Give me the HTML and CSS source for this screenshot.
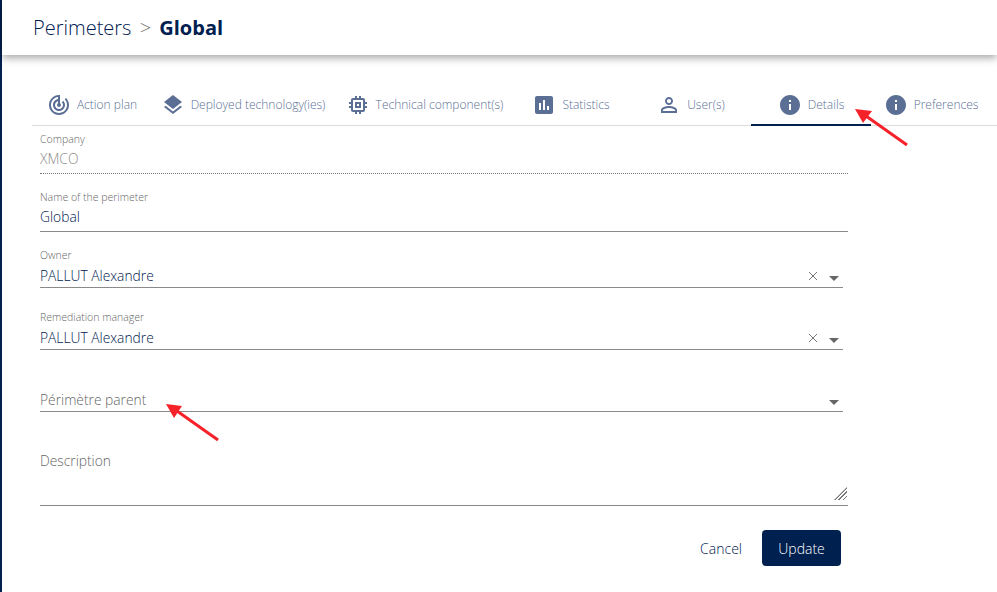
FILE: index.html
```html
<!DOCTYPE html>
<html lang="en">
<head>
    <meta charset="UTF-8">
    <title>Perimeters - Global</title>
    <link rel="stylesheet" href="styles.css">
</head>
<body>
    <div class="page">
        <header class="topbar">
            <h1 class="crumbs">Perimeters <span class="crumb-sep">&gt;</span> <strong>Global</strong></h1>
        </header>

        <nav class="tabs">
            <a class="tab">
                <svg class="tab-icon" viewBox="0 0 24 24"><path d="M19.07 4.93l-1.41 1.41C19.1 7.79 20 9.79 20 12c0 4.42-3.58 8-8 8s-8-3.58-8-8c0-4.08 3.05-7.44 7-7.93v2.02C8.16 6.57 6 9.03 6 12c0 3.31 2.69 6 6 6s6-2.69 6-6c0-1.66-.67-3.16-1.76-4.24l-1.41 1.41C15.55 9.9 16 10.9 16 12c0 2.21-1.79 4-4 4s-4-1.79-4-4c0-1.86 1.28-3.41 3-3.86v2.14c-.6.35-1 .98-1 1.72 0 1.1.9 2 2 2s2-.9 2-2c0-.74-.4-1.38-1-1.72V2h-1C6.48 2 2 6.48 2 12s4.48 10 10 10 10-4.48 10-10c0-2.76-1.12-5.26-2.93-7.07z"/></svg>
                Action plan
            </a>
            <a class="tab tab-deployed">
                <svg class="tab-icon" viewBox="0 0 24 24"><path d="M11.99 18.54l-7.37-5.73L3 14.07l9 7 9-7-1.63-1.27-7.38 5.74zM12 16l7.36-5.73L21 9l-9-7-9 7 1.63 1.27L12 16z"/></svg>
                Deployed technology(ies)
            </a>
            <a class="tab tab-technical">
                <svg class="tab-icon" viewBox="0 0 24 24"><path d="M15 9H9v6h6V9zm-2 4h-2v-2h2v2zm8-2V9h-2V7c0-1.1-.9-2-2-2h-2V3h-2v2h-2V3H9v2H7c-1.1 0-2 .9-2 2v2H3v2h2v2H3v2h2v2c0 1.1.9 2 2 2h2v2h2v-2h2v2h2v-2h2c1.1 0 2-.9 2-2v-2h2v-2h-2v-2h2zm-4 6H7V7h10v10z"/></svg>
                Technical component(s)
            </a>
            <a class="tab">
                <svg class="tab-icon" viewBox="0 0 24 24"><path d="M19 3H5c-1.1 0-2 .9-2 2v14c0 1.1.9 2 2 2h14c1.1 0 2-.9 2-2V5c0-1.1-.9-2-2-2zM9 17H7v-7h2v7zm4 0h-2V7h2v10zm4 0h-2v-4h2v4z"/></svg>
                Statistics
            </a>
            <a class="tab">
                <svg class="tab-icon" viewBox="0 0 24 24"><path d="M12 5.9c1.16 0 2.1.94 2.1 2.1s-.94 2.1-2.1 2.1S9.9 9.16 9.9 8s.94-2.1 2.1-2.1m0 9c2.97 0 6.1 1.46 6.1 2.1v1.1H5.9V17c0-.64 3.13-2.1 6.1-2.1M12 4C9.79 4 8 5.79 8 8s1.79 4 4 4 4-1.79 4-4-1.79-4-4-4zm0 9c-2.67 0-8 1.34-8 4v3h16v-3c0-2.66-5.33-4-8-4z"/></svg>
                User(s)
            </a>
            <a class="tab active">
                <svg class="tab-icon" viewBox="0 0 24 24"><path d="M12 2C6.48 2 2 6.48 2 12s4.48 10 10 10 10-4.48 10-10S17.52 2 12 2zm1 15h-2v-6h2v6zm0-8h-2V7h2v2z"/></svg>
                Details
            </a>
            <a class="tab">
                <svg class="tab-icon" viewBox="0 0 24 24"><path d="M12 2C6.48 2 2 6.48 2 12s4.48 10 10 10 10-4.48 10-10S17.52 2 12 2zm1 15h-2v-6h2v6zm0-8h-2V7h2v2z"/></svg>
                Preferences
            </a>
        </nav>

        <form class="details-form">
            <div class="field field-disabled">
                <label for="company">Company</label>
                <input type="text" id="company" value="XMCO" disabled>
            </div>

            <div class="field">
                <label for="perimeterName">Name of the perimeter</label>
                <input type="text" id="perimeterName" value="Global">
            </div>

            <div class="field field-select">
                <label>Owner</label>
                <div class="select-row">
                    <span class="select-value">PALLUT Alexandre</span>
                    <svg class="select-clear" viewBox="0 0 10 10"><path d="M1 1l8 8M9 1l-8 8"/></svg>
                    <span class="select-caret"></span>
                </div>
            </div>

            <div class="field field-select field-spaced">
                <label>Remediation manager</label>
                <div class="select-row">
                    <span class="select-value">PALLUT Alexandre</span>
                    <svg class="select-clear" viewBox="0 0 10 10"><path d="M1 1l8 8M9 1l-8 8"/></svg>
                    <span class="select-caret"></span>
                </div>
            </div>

            <div class="field field-select field-parent">
                <div class="select-row">
                    <span class="select-placeholder">Périmètre parent</span>
                    <span class="select-caret"></span>
                </div>
            </div>

            <div class="field field-description">
                <textarea id="description" placeholder="Description"></textarea>
            </div>

            <div class="form-actions">
                <button type="button" class="btn-cancel">Cancel</button>
                <button type="submit" class="btn-update">Update</button>
            </div>
        </form>

        <!-- red annotations drawn on top of the screenshot -->
        <svg class="annotations" viewBox="0 0 997 592">
            <line x1="907" y1="145" x2="866" y2="116"/>
            <polygon points="855,109 872,111 863,123"/>
            <line x1="218" y1="440" x2="177" y2="411"/>
            <polygon points="166,404 182,406 174,418"/>
        </svg>
    </div>
</body>
</html>
```

FILE: styles.css
```css
* {
    box-sizing: border-box;
}

html, body {
    margin: 0;
    height: 100%;
}

body {
    font-family: "Open Sans", "Liberation Sans", sans-serif;
    font-weight: 300;
    background-color: #fff;
    color: #00204f;
    overflow: hidden;
}

.page {
    position: relative;
    height: 592px;
    border-left: 2px solid #00204f;
}

.topbar {
    height: 55px;
    padding-left: 31px;
    display: flex;
    align-items: center;
    background-color: #fff;
    box-shadow: 0 3px 8px rgba(0, 0, 0, 0.35);
}

.crumbs {
    margin: 0 0 1px;
    font-size: 20px;
    font-weight: 300;
    line-height: 27px;
}

.crumb-sep {
    color: #666;
    margin: 0 3px;
}

.crumbs strong {
    font-weight: 700;
}

.tabs {
    display: flex;
    height: 50px;
    margin-top: 21px;
    margin-left: 30px;
    padding-top: 8px;
    border-bottom: 1px solid #dcdcdc;
}

.tab {
    position: relative;
    display: flex;
    align-items: center;
    justify-content: center;
    gap: 6px;
    min-width: 120px;
    padding: 0 7px;
    font-size: 12px;
    font-weight: 300;
    color: #5b6f95;
    white-space: nowrap;
}

.tab-deployed {
    min-width: 186px;
    padding-right: 11px;
}

.tab-technical {
    min-width: 173px;
}

.tab-icon {
    width: 24px;
    height: 24px;
    flex: none;
    fill: #5b6f95;
}

.tab.active::after {
    content: "";
    position: absolute;
    left: 0;
    right: 0;
    bottom: -1px;
    height: 2px;
    background-color: #00204f;
}

.details-form {
    width: 808px;
    margin-left: 38px;
}

.field {
    margin-top: 16px;
}

.field-disabled {
    margin-top: 6px;
}

.field label {
    display: block;
    height: 14px;
    margin-bottom: 3px;
    font-size: 10.5px;
    font-weight: 300;
    line-height: 14px;
    color: #666;
}

.field input {
    display: block;
    width: 100%;
    height: 25px;
    padding: 0 0 5px;
    border: none;
    border-bottom: 1px solid #8a8a8a;
    outline: none;
    background: none;
    font-family: inherit;
    font-weight: 300;
    font-size: 13.8px;
    line-height: 20px;
    color: #00204f;
}

.field-disabled input {
    color: #8a8a8a;
    border-bottom: 1px dotted #777;
}

.field-select {
    width: 803px;
}

.field-spaced {
    margin-top: 22px;
}

.field-parent {
    margin-top: 39px;
}

.select-row {
    display: flex;
    align-items: center;
    height: 23px;
    padding-top: 1px;
    padding-bottom: 1px;
    font-size: 13.8px;
    font-weight: 300;
    line-height: 20px;
    border-bottom: 1px solid #8a8a8a;
}

.select-value,
.select-placeholder {
    flex: 1;
}

.select-placeholder {
    color: #666;
}

.select-clear {
    width: 10px;
    height: 10px;
    margin-right: 11px;
    fill: none;
    stroke: #777;
    stroke-width: 1;
}

.select-caret {
    width: 0;
    height: 0;
    margin: 4px 4px 0 0;
    border-left: 5px solid transparent;
    border-right: 5px solid transparent;
    border-top: 5px solid #666;
}

.field-description {
    position: relative;
    margin-top: 37px;
    padding-bottom: 4px;
    border-bottom: 1px solid #8a8a8a;
}

.field-description::after {
    content: "";
    position: absolute;
    right: 1px;
    bottom: 5px;
    width: 13px;
    height: 13px;
    clip-path: polygon(100% 0, 100% 100%, 0 100%);
    background: repeating-linear-gradient(135deg, #777 0, #777 1px, transparent 1px, transparent 3px);
}

.field-description textarea {
    display: block;
    width: 100%;
    height: 52px;
    padding: 2px 0 0;
    border: none;
    outline: none;
    resize: none;
    background: none;
    font-family: inherit;
    font-weight: 300;
    font-size: 13.8px;
    line-height: 20px;
    color: #00204f;
}

.field-description textarea::placeholder {
    color: #666;
}

.form-actions {
    display: flex;
    justify-content: flex-end;
    align-items: center;
    gap: 20px;
    margin-top: 24px;
    padding-right: 7px;
}

.form-actions button {
    font-family: inherit;
    font-weight: 300;
    font-size: 14px;
    cursor: pointer;
}

.btn-cancel {
    padding: 0;
    border: none;
    background: none;
    color: #00204f;
}

.btn-update {
    width: 79px;
    height: 36px;
    border: none;
    border-radius: 4px;
    background-color: #00204f;
    color: #fff;
}

.annotations {
    position: absolute;
    left: -2px;
    top: 0;
    width: 997px;
    height: 592px;
    pointer-events: none;
}

.annotations line {
    stroke: #f5222a;
    stroke-width: 3;
}

.annotations polygon {
    fill: #f5222a;
}
```
